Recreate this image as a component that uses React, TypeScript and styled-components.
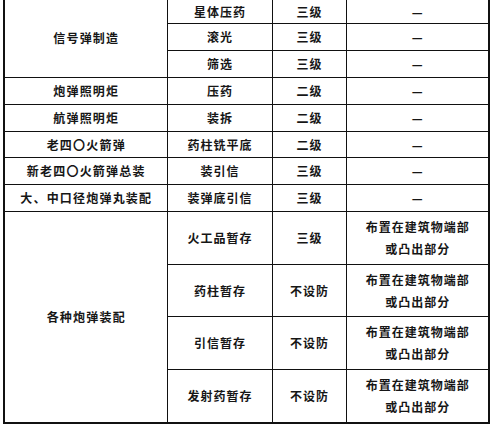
import React from 'react'
import styled, { createGlobalStyle } from 'styled-components'

const GlobalStyle = createGlobalStyle`
  html, body {
    margin: 0;
    padding: 0;
    background: #ffffff;
  }
  body {
    font-family: "Noto Sans CJK SC", "Liberation Serif", serif;
    color: #161616;
  }
`

const Page = styled.div`
  width: 490px;
  height: 424px;
  padding-left: 3px;
  box-sizing: border-box;
  overflow: hidden;
`

const Table = styled.table`
  border-collapse: collapse;
  table-layout: fixed;
  width: 485px;
  border-left: 2px solid #111;
  border-right: 2px solid #111;
  border-bottom: 2px solid #111;

  tr:first-child td {
    border-top: none;
  }
`

const Col = styled.col<{ $w: number }>`
  width: ${({ $w }) => $w}px;
`

const Cell = styled.td<{ $tall?: boolean; $first?: boolean }>`
  border: 1px solid #111;
  padding: 0;
  height: ${({ $tall, $first }) => ($tall ? '51.6px' : $first ? '23px' : '25.9px')};
  text-align: center;
  vertical-align: middle;
  font-size: 12px;
  font-weight: 600;
  letter-spacing: 1px;
  text-indent: 1px;
  line-height: 22px;
  white-space: nowrap;
`

const GroupCell = styled(Cell)`
  letter-spacing: 1.2px;
`

const Line = styled.div`
  display: block;
`

type Row = {
  group?: { name: string; span: number }
  step: string
  level: string
  note?: string[]
  tall?: boolean
}

const note = ['布置在建筑物端部', '或凸出部分']

const rows: Row[] = [
  { group: { name: '信号弹制造', span: 3 }, step: '星体压药', level: '三级' },
  { step: '滚光', level: '三级' },
  { step: '筛选', level: '三级' },
  { group: { name: '炮弹照明炬', span: 1 }, step: '压药', level: '二级' },
  { group: { name: '航弹照明炬', span: 1 }, step: '装拆', level: '二级' },
  { group: { name: '老四〇火箭弹', span: 1 }, step: '药柱铣平底', level: '二级' },
  { group: { name: '新老四〇火箭弹总装', span: 1 }, step: '装引信', level: '三级' },
  { group: { name: '大、中口径炮弹丸装配', span: 1 }, step: '装弹底引信', level: '三级' },
  { group: { name: '各种炮弹装配', span: 4 }, step: '火工品暂存', level: '三级', note, tall: true },
  { step: '药柱暂存', level: '不设防', note, tall: true },
  { step: '引信暂存', level: '不设防', note, tall: true },
  { step: '发射药暂存', level: '不设防', note, tall: true },
]

export default function App() {
  return (
    <Page>
      <GlobalStyle />
      <Table>
        <colgroup>
          <Col $w={163} />
          <Col $w={105} />
          <Col $w={74} />
          <Col $w={143} />
        </colgroup>
        <tbody>
          {rows.map((row, i) => (
            <tr key={i}>
              {row.group && (
                <GroupCell rowSpan={row.group.span} $first={i === 0}>
                  {row.group.name}
                </GroupCell>
              )}
              <Cell $tall={row.tall} $first={i === 0}>{row.step}</Cell>
              <Cell $tall={row.tall} $first={i === 0}>{row.level}</Cell>
              <Cell $tall={row.tall} $first={i === 0}>
                {row.note ? row.note.map((line) => <Line key={line}>{line}</Line>) : '—'}
              </Cell>
            </tr>
          ))}
        </tbody>
      </Table>
    </Page>
  )
}
